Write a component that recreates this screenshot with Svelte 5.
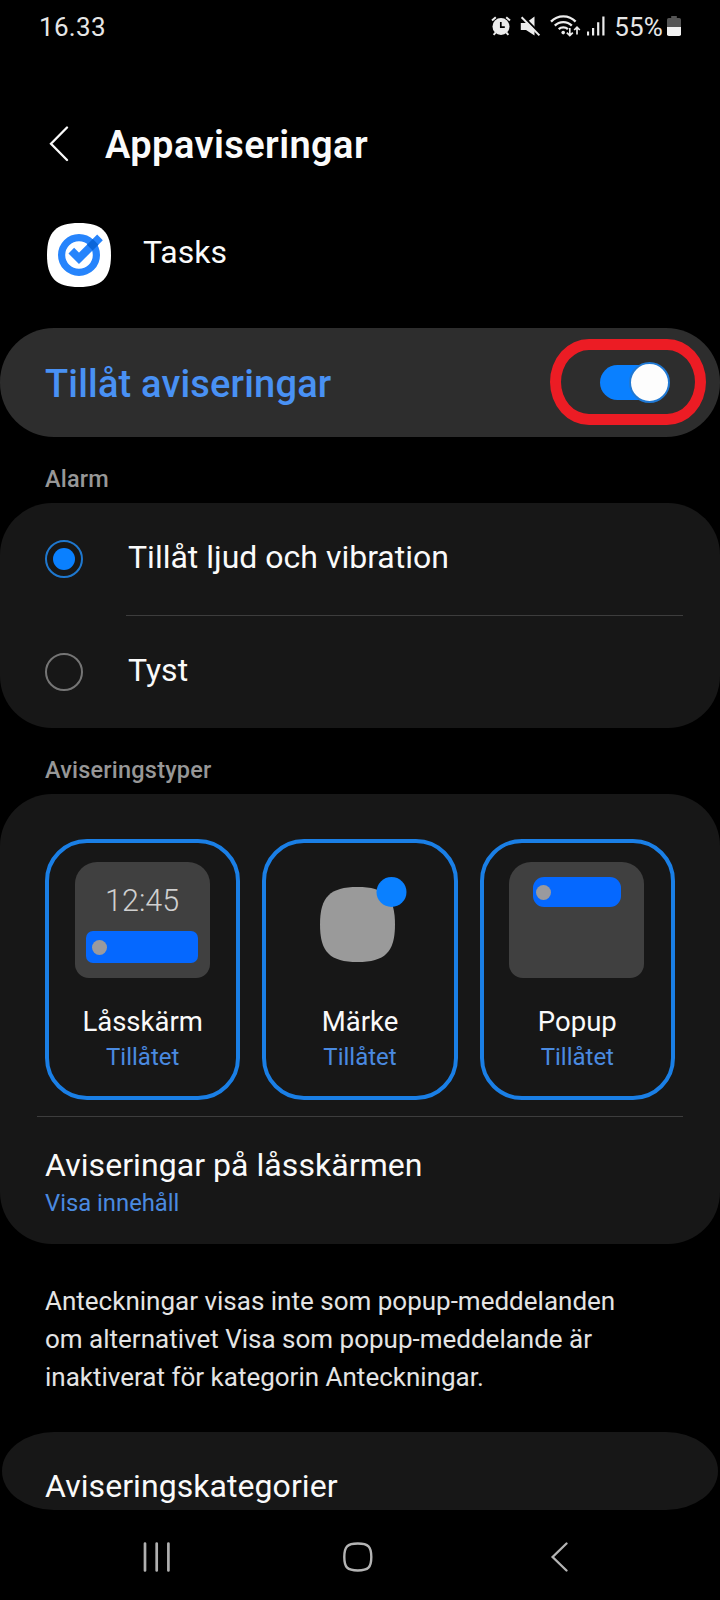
<script lang="ts">
  interface NotificationType {
    id: "lock" | "badge" | "popup";
    name: string;
    status: string;
  }

  const sounds = ["Tillåt ljud och vibration", "Tyst"];

  const types: NotificationType[] = [
    { id: "lock", name: "Låsskärm", status: "Tillåtet" },
    { id: "badge", name: "Märke", status: "Tillåtet" },
    { id: "popup", name: "Popup", status: "Tillåtet" },
  ];

  let allowed = $state(true);
  let sound = $state(0);
</script>

<div class="screen">
  <div class="status-bar">
    <span class="clock">16.33</span>
    <div class="status-icons">
      <svg class="alarm" width="20" height="20" viewBox="0 0 20 20">
        <circle cx="10" cy="10.5" r="8.5" fill="#ececec" />
        <path d="M1 4.6 4.8 1.2M19 4.6 15.2 1.2M4.6 16.6 2.6 18.8M15.4 16.6l2 2.2" stroke="#ececec" stroke-width="2" />
        <path d="M9.8 6v5.2h4" fill="none" stroke="#000" stroke-width="1.7" />
      </svg>
      <svg class="mute" width="21" height="21" viewBox="0 0 21 21">
        <path d="M.8 7h5L14.5.5v19L6 14H.8z" fill="#ececec" />
        <path d="M2.8.2 20.4 18" stroke="#000" stroke-width="2.2" />
        <path d="M1.6 1.2 19.4 19.4" stroke="#ececec" stroke-width="2" />
      </svg>
      <svg class="wifi" width="31" height="24" viewBox="0 0 31 24">
        <g fill="none" stroke="#ececec" stroke-width="2.3">
          <path d="M1 7.6a17 17 0 0 1 24.6 0" />
          <path d="M4.8 11.6a12 12 0 0 1 17 0" />
          <path d="M8.7 15.2a6.8 6.8 0 0 1 9.2 0" />
          <path d="M19.8 14v7.4M16.8 18.6l3 3 3-3M27 20.6v-7.4M24.2 16l2.8-2.9 2.8 2.9" stroke-width="1.7" />
        </g>
        <circle cx="13.2" cy="18.6" r="1.8" fill="#ececec" />
      </svg>
      <svg class="signal" width="18" height="20" viewBox="0 0 18 20">
        <path d="M1 15.5v4M6.1 12v7.5M11.2 6.3v13.2M16.4.5v19" stroke="#ececec" stroke-width="2.2" />
      </svg>
      <span class="percent">55%</span>
      <svg class="battery" width="14" height="20" viewBox="0 0 14 20">
        <path d="M4.2 0h5.6v2h2.4A1.8 1.8 0 0 1 14 3.8V11H0V3.8A1.8 1.8 0 0 1 1.8 2h2.4z" fill="#555" />
        <path d="M0 11h14v7.2a1.8 1.8 0 0 1-1.8 1.8H1.8A1.8 1.8 0 0 1 0 18.2z" fill="#f2f2f2" />
      </svg>
    </div>
  </div>

  <header>
    <svg width="20" height="36" viewBox="0 0 20 36">
      <path d="M18 1.5 2 17.8 18 34" fill="none" stroke="#fafafa" stroke-width="2.3" stroke-linecap="round" />
    </svg>
    <h1>Appaviseringar</h1>
  </header>

  <div class="app">
    <svg width="64" height="64" viewBox="0 0 64 64">
      <path d="M32 0C55 0 64 9 64 32S55 64 32 64 0 55 0 32 9 0 32 0z" fill="#fff" />
      <circle cx="32" cy="32" r="17.4" fill="none" stroke="#2684fc" stroke-width="7.2" />
      <path d="M24.3 27.7 32 35.4 53 14.4" fill="none" stroke="#2684fc" stroke-width="8" />
      <path d="M42.8 24.6 48.6 18.8" stroke="#0a66da" stroke-width="8" />
    </svg>
    <span>Tasks</span>
  </div>

  <div class="allow">
    <span class="allow-label">Tillåt aviseringar</span>
    <button class="switch" class:on={allowed} aria-label="Tillåt aviseringar" onclick={() => (allowed = !allowed)}>
      <span class="thumb"></span>
    </button>
    <div class="marker"></div>
  </div>

  <h2>Alarm</h2>
  <section class="card">
    {#each sounds as label, i}
      <button class="option" onclick={() => (sound = i)}>
        <span class="radio" class:checked={sound === i}></span>
        <span class="option-label">{label}</span>
      </button>
    {/each}
  </section>

  <h2>Aviseringstyper</h2>
  <section class="card">
    <div class="types">
      {#each types as type}
        <div class="type">
          {#if type.id === "lock"}
            <div class="preview">
              <span class="preview-time">12:45</span>
              <div class="bar"><i></i></div>
            </div>
          {:else if type.id === "badge"}
            <svg class="badge" width="135" height="116" viewBox="0 0 135 116">
              <path d="M65.5 25C93 25 103 35 103 62.5S93 100 65.5 100 28 90 28 62.5 38 25 65.5 25z" fill="#9a9a9a" />
              <circle cx="99.5" cy="30" r="15" fill="#0a80ff" />
            </svg>
          {:else}
            <div class="preview">
              <div class="bar top"><i></i></div>
            </div>
          {/if}
          <span class="type-name">{type.name}</span>
          <span class="type-status">{type.status}</span>
        </div>
      {/each}
    </div>
    <div class="lock-setting">
      <span class="setting-name">Aviseringar på låsskärmen</span>
      <span class="setting-value">Visa innehåll</span>
    </div>
  </section>

  <p>
    Anteckningar visas inte som popup-meddelanden<br />
    om alternativet Visa som popup-meddelande är<br />
    inaktiverat för kategorin Anteckningar.
  </p>

  <section class="categories">Aviseringskategorier</section>

  <nav>
    <svg width="30" height="30" viewBox="0 0 30 30">
      <path d="M3 1.5v27M14.7 1.5v27M26.4 1.5v27" stroke="#b0b0b0" stroke-width="2.7" stroke-linecap="round" />
    </svg>
    <svg width="30" height="30" viewBox="0 0 30 30">
      <path d="M14.8 1.5C25.3 1.5 28.3 4.5 28.3 15S25.3 28.5 14.8 28.5 1.3 25.5 1.3 15 4.3 1.5 14.8 1.5z" fill="none" stroke="#b4b4b4" stroke-width="2.4" />
    </svg>
    <svg width="30" height="30" viewBox="0 0 30 30">
      <path d="M22.5 1.5 8.6 15l13.9 13.5" fill="none" stroke="#b4b4b4" stroke-width="2.3" stroke-linecap="round" />
    </svg>
  </nav>
</div>

<style>
  :global(body) {
    background: #000;
  }

  .screen {
    width: 720px;
    height: 1600px;
    overflow: hidden;
    background: #000;
    color: #fafafa;
    font-family: Roboto, "Liberation Sans", sans-serif;
  }

  svg {
    display: block;
    flex: none;
  }

  button {
    border: 0;
    padding: 0;
    background: none;
    color: inherit;
    font: inherit;
    text-align: left;
  }

  .status-bar {
    display: flex;
    justify-content: space-between;
    height: 54px;
    padding: 0 39px;
    font-size: 26px;
    line-height: 54px;
    color: #e6e6e6;
  }

  .clock {
    letter-spacing: 0.3px;
  }

  .status-icons {
    display: flex;
    align-items: flex-start;
  }

  .alarm,
  .mute,
  .signal,
  .battery {
    margin-top: 16px;
  }

  .mute {
    margin-left: 9px;
  }

  .wifi {
    margin: 14px 0 0 9px;
  }

  .signal {
    margin-left: 6px;
  }

  .percent {
    margin-left: 9px;
    letter-spacing: 0.2px;
  }

  .battery {
    margin-left: 4px;
  }

  header {
    display: flex;
    align-items: center;
    height: 46px;
    margin-top: 68px;
    padding-left: 49px;
  }

  header svg {
    margin-top: -3px;
  }

  h1 {
    margin: 0 0 0 36px;
    font-size: 38px;
    line-height: 46px;
    font-weight: 600;
    letter-spacing: 0.42px;
  }

  .app {
    display: flex;
    height: 64px;
    margin: 55px 0 41px 47px;
    font-size: 32px;
    line-height: 58px;
  }

  .app span {
    margin-left: 32px;
  }

  .allow {
    position: relative;
    display: flex;
    align-items: center;
    justify-content: space-between;
    height: 109px;
    padding: 0 51px 0 45px;
    box-sizing: border-box;
    border-radius: 54px;
    background: #2d2d2d;
  }

  .allow-label {
    padding-top: 2px;
    font-size: 38px;
    font-weight: 500;
    letter-spacing: 0.18px;
    color: #4991f4;
  }

  .switch {
    display: flex;
    align-items: center;
    width: 69px;
    height: 35px;
    border-radius: 18px;
    background: #555;
  }

  .switch.on {
    justify-content: flex-end;
    background: #0a80ff;
  }

  .thumb {
    flex: none;
    width: 37px;
    height: 37px;
    margin-right: -1px;
    border: 2px solid #2079d4;
    border-radius: 50%;
    background: #fdfdfd;
  }

  /* hand-drawn style ring around the switch */
  .marker {
    position: absolute;
    top: 11px;
    right: 14px;
    width: 156px;
    height: 86px;
    box-sizing: border-box;
    border: 11px solid #ec1c24;
    border-radius: 39px / 43px;
    pointer-events: none;
  }

  h2 {
    margin: 0;
    padding: 18px 0 0 45px;
    font-size: 23.5px;
    line-height: 48px;
    font-weight: 500;
    letter-spacing: 0.2px;
    color: #979797;
  }

  .card {
    border-radius: 52px;
    background: #171717;
  }

  .option {
    display: flex;
    align-items: center;
    width: 100%;
    height: 112px;
    padding-left: 45px;
  }

  .option + .option {
    height: 113px;
    border-top: 1px solid #3d3d3d;
    border-image: linear-gradient(to right, transparent 127px, #3d3d3d 127px, #3d3d3d 682px, transparent 682px) 1;
  }

  .radio {
    display: flex;
    align-items: center;
    justify-content: center;
    width: 38px;
    height: 38px;
    box-sizing: border-box;
    border: 2px solid #757575;
    border-radius: 50%;
  }

  .radio.checked {
    border-color: #1f78cf;
  }

  .radio.checked::after {
    content: "";
    width: 22px;
    height: 22px;
    border-radius: 50%;
    background: #0a80ff;
  }

  .option-label {
    margin: -4px 0 0 45px;
    font-size: 32px;
  }

  .types {
    display: flex;
    gap: 22px;
    padding: 45px 45px 16px;
  }

  .type {
    display: flex;
    flex: 1;
    flex-direction: column;
    align-items: center;
    height: 261px;
    padding-top: 19px;
    box-sizing: border-box;
    border: 4px solid #1a7fe6;
    border-radius: 42px;
  }

  .preview {
    display: flex;
    flex-direction: column;
    align-items: center;
    width: 135px;
    height: 116px;
    margin-right: 1px;
    border-radius: 22px 22px 14px 14px;
    background: #404040;
  }

  .preview-time {
    margin-top: 20px;
    font-size: 30.5px;
    line-height: 38px;
    font-weight: 300;
    color: #d0d0d0;
  }

  .bar {
    display: flex;
    align-items: center;
    width: 112px;
    height: 32px;
    margin: 11px 1px 0 0;
    padding-left: 6px;
    box-sizing: border-box;
    border-radius: 7px;
    background: #0568ff;
  }

  .bar.top {
    width: 88px;
    height: 30px;
    margin: 15px 0 0 1px;
    padding-left: 3px;
    border-radius: 11px;
  }

  .bar i {
    width: 15px;
    height: 15px;
    border-radius: 50%;
    background: #9a9a9e;
  }

  .type-name {
    margin-top: 26px;
    font-size: 27.5px;
    line-height: 36px;
  }

  .type-status {
    margin-top: -1px;
    font-size: 24px;
    line-height: 36px;
    color: #4a8ae0;
  }

  .lock-setting {
    display: flex;
    flex-direction: column;
    height: 128px;
    margin: 0 37px;
    padding: 28px 8px 0;
    box-sizing: border-box;
    border-top: 1px solid #3d3d3d;
  }

  .setting-name {
    font-size: 32px;
    line-height: 40px;
    letter-spacing: 0.06px;
  }

  .setting-value {
    font-size: 23.8px;
    line-height: 36px;
    color: #4a8ae0;
  }

  p {
    margin: 38px 45px 36px;
    font-size: 26px;
    line-height: 38px;
    color: #e4e4e4;
  }

  .categories {
    height: 78px;
    margin: 0 2px;
    padding: 34px 0 0 43px;
    box-sizing: border-box;
    border-radius: 52px / 39px;
    background: #171717;
    font-size: 32px;
    line-height: 40px;
    letter-spacing: 0.06px;
  }

  nav {
    display: flex;
    align-items: center;
    gap: 171px;
    height: 90px;
    padding: 3px 0 0 142px;
    box-sizing: border-box;
  }
</style>
